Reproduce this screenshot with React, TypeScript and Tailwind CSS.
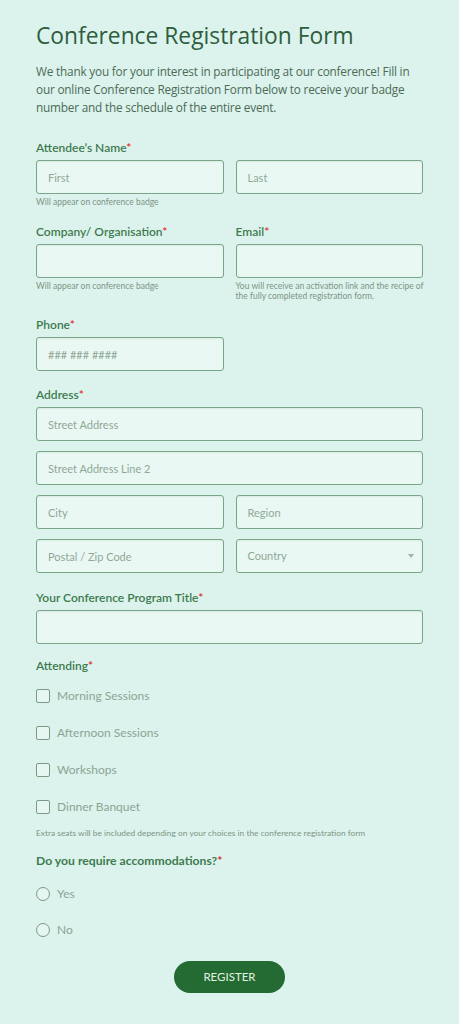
import React from 'react';

const labelCls = "block text-[12px] leading-4 font-semibold text-[#3f7a4f] mb-1 font-['Lato',sans-serif]";
const inputCls =
  "block w-full h-[34px] rounded-[3px] border border-[#7aa688] bg-[#eaf8f3] px-[11px] text-[11px] text-[#4d6b58] placeholder:text-[#8ea897] outline-none font-['Lato',sans-serif] shadow-[inset_0_1px_2px_rgba(0,0,0,0.06)]";
const helpCls = "mt-[3px] text-[8.5px] leading-[10px] text-[#7f9488] font-['Lato',sans-serif]";

function Req() {
  return <span className="text-[#e0302d]">*</span>;
}

function Label({ children }: { children: React.ReactNode }) {
  return (
    <label className={labelCls}>
      {children}
      <Req />
    </label>
  );
}

function Check({ text }: { text: string }) {
  return (
    <div className="flex h-[37px] items-center gap-[7px]">
      <span className="h-[14px] w-[14px] rounded-[2px] border border-[#7a9a86] bg-[#e6f6f0]" />
      <span className="text-[12px] text-[#8aa595] font-['Lato',sans-serif]">{text}</span>
    </div>
  );
}

function Radio({ text }: { text: string }) {
  return (
    <div className="flex h-[36px] items-center gap-[7px]">
      <span className="h-[14px] w-[14px] rounded-full border border-[#7a9a86] bg-[#e6f6f0]" />
      <span className="text-[12px] text-[#8aa595] font-['Lato',sans-serif]">{text}</span>
    </div>
  );
}

export default function App() {
  return (
    <div className="min-h-[1024px] w-full bg-[#dbf3ec] px-9 pt-5 pb-8">
      <h1 className="text-[22.8px] leading-8 text-[#2f5d3e] font-['Open_Sans',sans-serif]">
        Conference Registration Form
      </h1>
      <p className="mt-[10px] whitespace-nowrap text-[11.8px] leading-[18px] tracking-[-0.2px] text-[#4c6a56] font-['Open_Sans',sans-serif]">
        We thank you for your interest in participating at our conference! Fill in
        <br />
        our online Conference Registration Form below to receive your badge
        <br />
        number and the schedule of the entire event.
      </p>

      <div className="mt-6">
        <Label>Attendee&rsquo;s Name</Label>
        <div className="grid grid-cols-2 gap-3">
          <input className={inputCls} placeholder="First" />
          <input className={inputCls} placeholder="Last" />
        </div>
        <p className={helpCls}>Will appear on conference badge</p>
      </div>

      <div className="mt-[17px] grid grid-cols-2 gap-x-3">
        <div>
          <Label>Company/ Organisation</Label>
          <input className={inputCls} />
          <p className={helpCls}>Will appear on conference badge</p>
        </div>
        <div>
          <Label>Email</Label>
          <input className={inputCls} />
          <p className={helpCls + ' whitespace-nowrap'}>
            You will receive an activation link and the recipe of
            <br />
            the fully completed registration form.
          </p>
        </div>
      </div>

      <div className="mt-[16px] grid grid-cols-2 gap-x-3">
        <div>
          <Label>Phone</Label>
          <input className={inputCls} placeholder="### ### ####" />
        </div>
      </div>

      <div className="mt-[16px]">
        <Label>Address</Label>
        <div className="flex flex-col gap-[10px]">
          <input className={inputCls} placeholder="Street Address" />
          <input className={inputCls} placeholder="Street Address Line 2" />
          <div className="grid grid-cols-2 gap-3">
            <input className={inputCls} placeholder="City" />
            <input className={inputCls} placeholder="Region" />
          </div>
          <div className="grid grid-cols-2 gap-3">
            <input className={inputCls} placeholder="Postal / Zip Code" />
            <div className="relative">
              <div className={inputCls + ' flex items-center text-[#8ea897]'}>Country</div>
              <span className="absolute right-[9px] top-[15px] h-0 w-0 border-x-[3px] border-t-[4px] border-x-transparent border-t-[#9fb3a6]" />
            </div>
          </div>
        </div>
      </div>

      <div className="mt-[17px]">
        <Label>Your Conference Program Title</Label>
        <input className={inputCls} />
      </div>

      <div className="mt-[14px]">
        <label className={labelCls + ' !mb-0'}>
          Attending
          <Req />
        </label>
        <div className="mt-[3px]">
          <Check text="Morning Sessions" />
          <Check text="Afternoon Sessions" />
          <Check text="Workshops" />
          <Check text="Dinner Banquet" />
        </div>
        <p className="mt-[2px] text-[8.4px] leading-[12px] text-[#7f9488] font-['Lato',sans-serif]">
          Extra seats will be included depending on your choices in the conference registration form
        </p>
      </div>

      <div className="mt-[13px]">
        <p className="text-[12.2px] leading-[18px] font-bold text-[#3f7a4f] font-['Lato',sans-serif]">
          Do you require accommodations?
          <Req />
        </p>
        <div className="mt-[6px]">
          <Radio text="Yes" />
          <Radio text="No" />
        </div>
      </div>

      <div className="mt-[13px] flex justify-center">
        <button className="h-8 w-[111px] rounded-full bg-[#236a33] text-[11.5px] text-[#e3f2e0] font-['Lato',sans-serif]">
          REGISTER
        </button>
      </div>
    </div>
  );
}
